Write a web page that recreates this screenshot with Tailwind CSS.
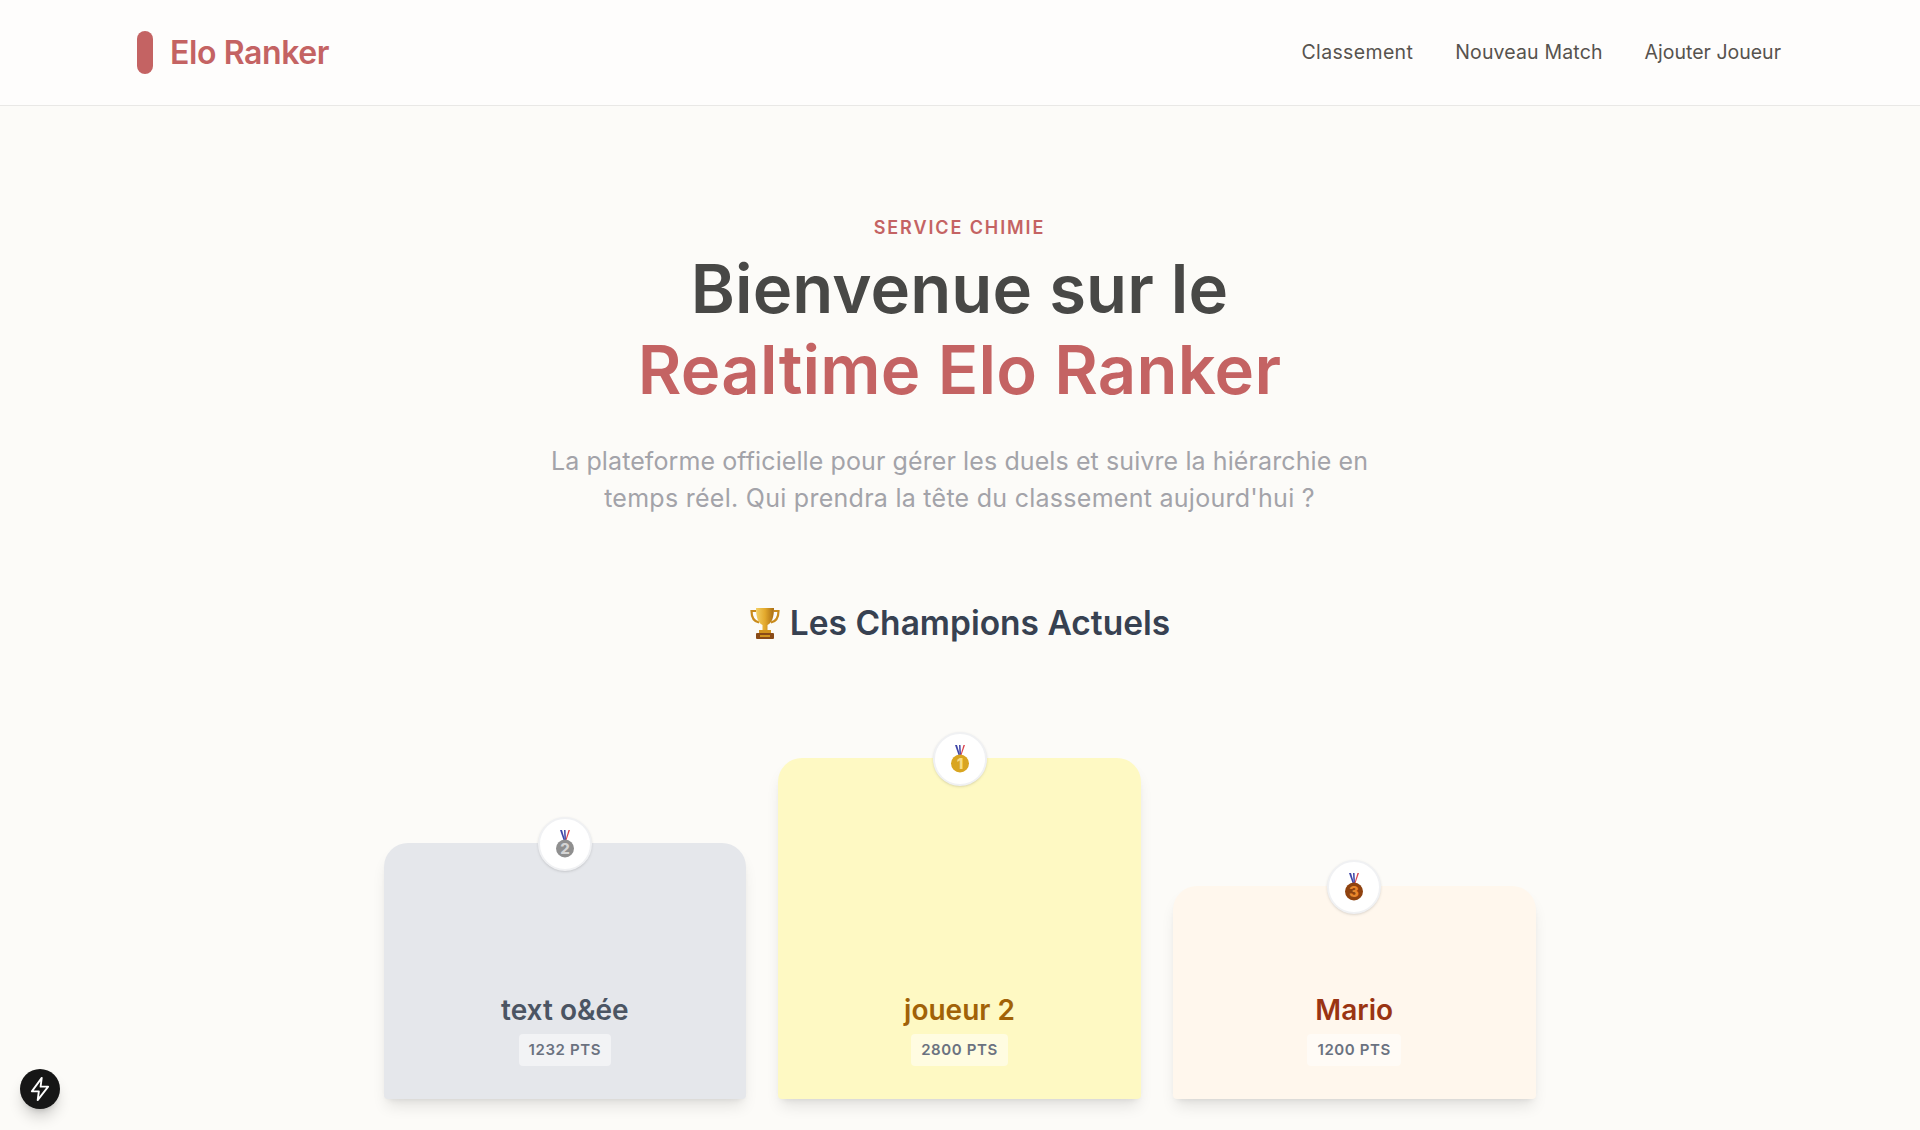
<!DOCTYPE html>
<html lang="fr">
<head>
    <title>Elo Ranker</title>
    <script src="https://cdn.jsdelivr.net/npm/@tailwindcss/browser@4"></script>
</head>
<body class="bg-[#fcfbf8] h-[1130px] overflow-hidden font-['Inter',sans-serif]">
    <!-- Header -->
    <header class="h-[106px] bg-[#fefdfc] border-b border-[#e9e8e6] pl-[137px] pr-[139px] flex items-center justify-between">
        <a href="#" class="flex items-center gap-[17px]">
            <span class="w-4 h-[43px] rounded-full bg-[#c46363]"></span>
            <span class="text-[32px] font-semibold text-[#c46363] tracking-[-0.4px]">Elo Ranker</span>
        </a>
        <nav class="flex gap-[42px] text-[19.5px] tracking-[0.1px] text-[#57534e]">
            <a href="#" class="tracking-[0.35px]">Classement</a>
            <a href="#" class="tracking-[0.15px]">Nouveau Match</a>
            <a href="#" class="tracking-[0px]">Ajouter Joueur</a>
        </nav>
    </header>

    <main class="flex flex-col items-center pr-[1px]">
        <!-- Hero -->
        <p class="mt-[110px] text-[18px] leading-6 font-semibold tracking-[1.9px] text-[#c46363]">SERVICE CHIMIE</p>
        <h1 class="mt-[8px] text-center text-[67px] leading-[81px] font-semibold tracking-[0.1px] text-[#484846]">
            Bienvenue sur le<br>
            <span class="text-[#c46363] tracking-[0.2px]">Realtime Elo Ranker</span>
        </h1>
        <p class="mt-[33px] w-[900px] text-center text-[25px] leading-[37px] tracking-[0.1px] text-[#a3a3a9]">
            La plateforme officielle pour gérer les duels et suivre la hiérarchie en<br>
            <span class="tracking-[0.27px]">temps réel. Qui prendra la tête du classement aujourd'hui ?</span>
        </p>

        <h2 class="mt-[86px] flex items-center gap-[9px] text-[33.5px] leading-10 font-semibold text-[#374151]">
            <svg class="w-8 h-[34px]" viewBox="0 0 32 34">
                <defs>
                    <linearGradient id="cup" x1="0" x2="1" y1="0" y2="0">
                        <stop offset="0" stop-color="#f3cf63"/>
                        <stop offset="0.5" stop-color="#e3a92c"/>
                        <stop offset="1" stop-color="#a96c12"/>
                    </linearGradient>
                </defs>
                <path d="M7 5H2.500C2.500 12 5 15.500 10 16.500M25 5h4.500C29.500 12 27 15.500 22 16.500" fill="none" stroke="#c98a1b" stroke-width="2.200"/>
                <path d="M7 2h18c0 9-2 15-6.500 17v5h-5v-5C9 17 7 11 7 2z" fill="url(#cup)"/>
                <rect x="10" y="24" width="12" height="3" fill="#d3941d"/>
                <rect x="7" y="27" width="18" height="6" rx="1" fill="#8a4b17"/>
                <rect x="11" y="29" width="10" height="2" fill="#d3941d"/>
            </svg>
            Les Champions Actuels
        </h2>

        <!-- Podium -->
        <section class="mt-[115px] w-[1152px] flex items-end gap-8">
            <article class="relative flex-1 h-[256px] rounded-t-3xl rounded-b-sm bg-[#e5e7eb] shadow-lg shadow-black/10 flex flex-col items-center justify-end pb-[33px]">
                <span class="absolute -top-[26px] left-1/2 -translate-x-1/2 w-[54px] h-[54px] rounded-full bg-white border-2 border-[#f0f1f3] shadow-sm flex items-center justify-center">
                    <svg class="w-5 h-[30px]" viewBox="0 0 20 30">
                        <path d="M5 1h2l3 10H8.500z" fill="#3f46a8"/>
                        <path d="M9 1h1.500L11 11H9.500z" fill="#3f46a8"/>
                        <path d="M13.500 1H15l-3.500 10H10.500z" fill="#d9444f"/>
                        <circle cx="10" cy="19.500" r="9" fill="#8f8f8f"/>
                        <text x="10" y="25" text-anchor="middle" font-size="15" font-weight="800" fill="#d4d4d4">2</text>
                    </svg>
                </span>
                <h3 class="text-[28px] leading-9 font-semibold text-[#4b5563]">text o&amp;ée</h3>
                <span class="mt-[6px] h-8 px-[10px] rounded bg-white/50 text-[15px] leading-8 font-semibold tracking-[0.6px] text-[#6b7280]">1232 PTS</span>
            </article>

            <article class="relative flex-1 h-[341px] rounded-t-3xl rounded-b-sm bg-[#fef9c3] shadow-lg shadow-black/10 flex flex-col items-center justify-end pb-[33px]">
                <span class="absolute -top-[26px] left-1/2 -translate-x-1/2 w-[54px] h-[54px] rounded-full bg-white border-2 border-[#f0f1f3] shadow-sm flex items-center justify-center">
                    <svg class="w-5 h-[30px]" viewBox="0 0 20 30">
                        <path d="M5 1h2l3 10H8.500z" fill="#3f46a8"/>
                        <path d="M9 1h1.500L11 11H9.500z" fill="#3f46a8"/>
                        <path d="M13.500 1H15l-3.500 10H10.500z" fill="#d9444f"/>
                        <circle cx="10" cy="19.500" r="9" fill="#d9a520"/>
                        <text x="10" y="25" text-anchor="middle" font-size="15" font-weight="800" fill="#f7dc83">1</text>
                    </svg>
                </span>
                <h3 class="text-[28px] leading-9 font-semibold text-[#a16207]">joueur 2</h3>
                <span class="mt-[6px] h-8 px-[10px] rounded bg-white/50 text-[15px] leading-8 font-semibold tracking-[0.6px] text-[#6b7280]">2800 PTS</span>
            </article>

            <article class="relative flex-1 h-[213px] rounded-t-3xl rounded-b-sm bg-[#fff7ed] shadow-lg shadow-black/10 flex flex-col items-center justify-end pb-[33px]">
                <span class="absolute -top-[26px] left-1/2 -translate-x-1/2 w-[54px] h-[54px] rounded-full bg-white border-2 border-[#f0f1f3] shadow-sm flex items-center justify-center">
                    <svg class="w-5 h-[30px]" viewBox="0 0 20 30">
                        <path d="M5 1h2l3 10H8.500z" fill="#3f46a8"/>
                        <path d="M9 1h1.500L11 11H9.500z" fill="#3f46a8"/>
                        <path d="M13.500 1H15l-3.500 10H10.500z" fill="#d9444f"/>
                        <circle cx="10" cy="19.500" r="9" fill="#8f420f"/>
                        <text x="10" y="25" text-anchor="middle" font-size="15" font-weight="800" fill="#e8862c">3</text>
                    </svg>
                </span>
                <h3 class="text-[28px] leading-9 font-semibold text-[#9a3412]">Mario</h3>
                <span class="mt-[6px] h-8 px-[10px] rounded bg-white/50 text-[15px] leading-8 font-semibold tracking-[0.6px] text-[#6b7280]">1200 PTS</span>
            </article>
        </section>
    </main>

    <!-- Dev indicator -->
    <button class="absolute left-5 top-[1069px] w-10 h-10 rounded-full bg-[#161616] shadow-lg shadow-black/20 flex items-center justify-center">
        <svg class="w-7 h-7" viewBox="0 0 24 24" fill="none" stroke="#ffffff" stroke-width="1.600" stroke-linejoin="round">
            <path d="M13.500 2.500L5 14h6l-1 7.500L19 10h-6.500z"/>
        </svg>
    </button>
</body>
</html>
